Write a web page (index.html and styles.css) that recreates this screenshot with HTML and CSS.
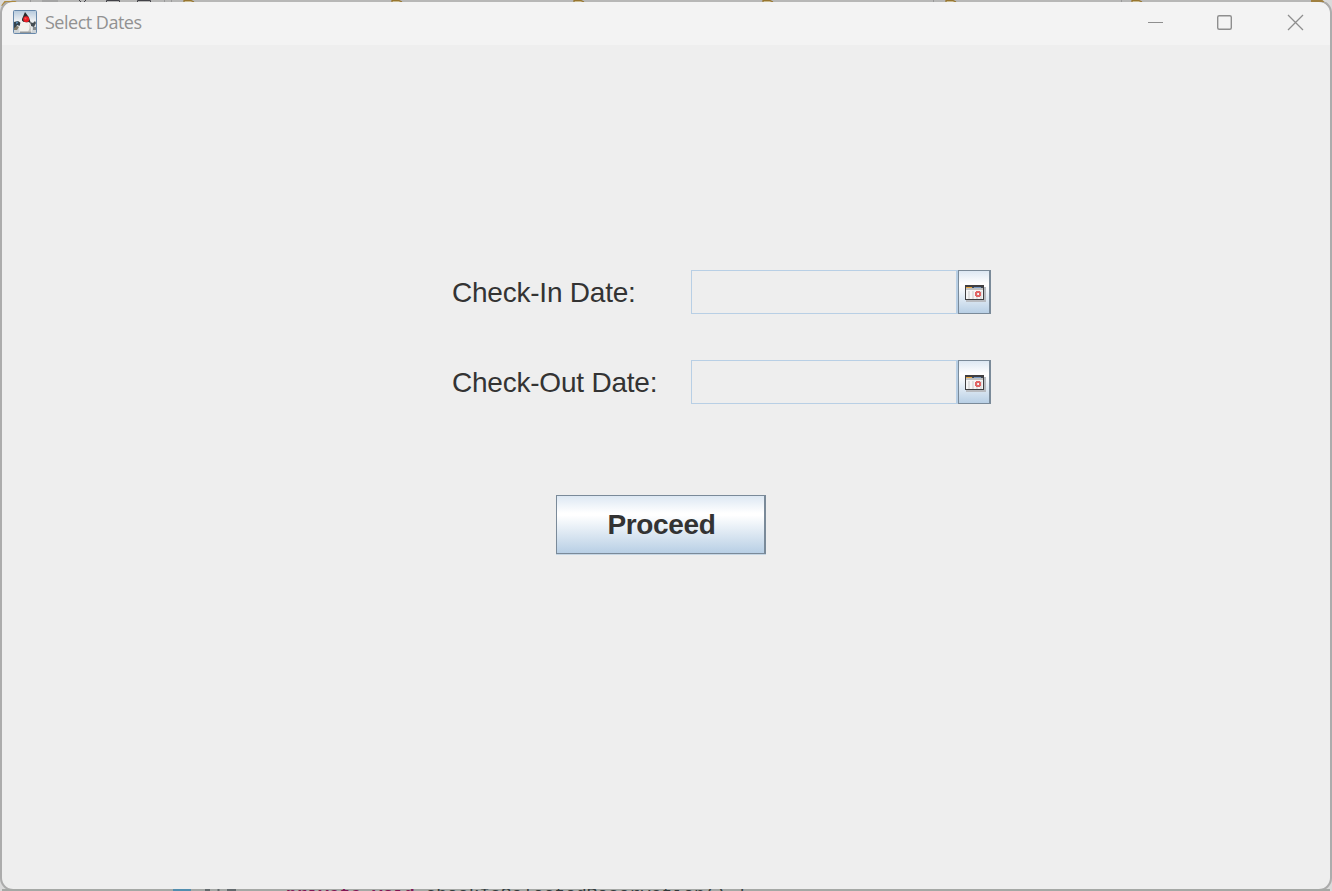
FILE: index.html
```html
<!DOCTYPE html>
<html lang="en">
<head>
<meta charset="utf-8">
<title>Select Dates</title>
<link rel="stylesheet" href="styles.css">
</head>
<body>
<svg class="backdrop" width="1332" height="891" viewBox="0 0 1332 891" aria-hidden="true">
  <defs><path id="tab" d="M0 2V.5H7L10 2" fill="#c8b98f" stroke="#98762f" stroke-width="1.200"/></defs>
  <path d="M0 0H1332V891H0Z" fill="#b7b7b6"/>
  <path d="M0 0H12L0 12Z M0 876V891H14Z M1332 0H1318L1332 12Z M1332 876V891H1318Z" fill="#dadada"/>
  <path d="M2 6L5 2H15L18 4" fill="none" stroke="#ae8a3d" stroke-width="2"/>
  <path d="M30.500 0V2M164.500 0V2M171.500 0V2M933.500 0V2M1121.500 0V2" stroke="#999"/>
  <path d="M42 1H58" stroke="#a4a4a4" stroke-width="2"/>
  <path d="M79 0L81 2M86 0L84 2M106.500 2V.5H119.500V2M137.500 2V.5H150.500V2" stroke="#424248" fill="none"/>
  <use href="#tab" x="184"/><use href="#tab" x="392"/><use href="#tab" x="574"/><use href="#tab" x="763"/><use href="#tab" x="946"/><use href="#tab" x="1132"/>
  <path d="M1312 3V1H1322L1328 6" fill="none" stroke="#a08040" stroke-width="2"/>
  <path d="M2 889H1330V891H2Z" fill="#a5a8a5"/>
  <path d="M173 890H191" stroke="#528eaf" stroke-width="2"/>
  <path d="M205 890H210M218.500 889V891M227 890H236" stroke="#62696c" stroke-width="2"/>
</svg>
<div class="code"><span class="keyword">private void</span> checkIsSelectedReservation() {</div>
<main class="window">
  <header class="titlebar">
    <svg class="duke" width="24" height="24" viewBox="0 0 24 24">
      <defs><linearGradient id="sky" x2="0" y2="1"><stop stop-color="#b5c9dc"/><stop offset=".45" stop-color="#eef1f3"/><stop offset="1" stop-color="#c7cdd1"/></linearGradient></defs>
      <rect x=".5" y=".5" width="23" height="23" rx="1" fill="url(#sky)" stroke="#6788aa"/>
      <path d="M1 12L5 11L8 13L7 16L4 15L3 18H1Z" fill="#35434d"/>
      <path d="M3 12L5 11.500V13L3 14Z" fill="#5887ac"/>
      <path d="M1 18L4 16L6 17L4 20H1Z" fill="#827a66"/>
      <path d="M17 12L20 13L22 11L23 13L21 17L18 16Z" fill="#454d52"/>
      <path d="M20 17H23V20H20Z" fill="#858b8e"/>
      <path d="M12 2Q16 6 17.500 12L15 14L9 13L9 9Z" fill="#292b2d"/>
      <path d="M8.500 10Q10 13 16 12Q20 18 18.500 22H6.500Q5.500 17 8.500 10Z" fill="#f3f2ee"/>
      <path d="M16 13Q19 19 17.500 21.500H15Q17.500 18 16 13Z" fill="#c5c5c1"/>
      <path d="M7 21.500H18V23H7Z" fill="#93979a"/>
      <circle cx="13.200" cy="9.300" r="3" fill="#e91e25"/>
      <circle cx="12.500" cy="8.500" r="1" fill="#ff5452"/>
    </svg>
    <span class="title">Select Dates</span>
    <svg class="controls" width="158" height="18" viewBox="0 0 158 18" fill="none" stroke="#8e8e8e">
      <path d="M0 8.500H15"/>
      <rect x="69.700" y="1.700" width="13.600" height="13.600" rx="1.500" stroke-width="1.400"/>
      <path d="M140 1L155 16M155 1L140 16" stroke-width="1.300"/>
    </svg>
  </header>
  <section class="form">
    <div class="row"><label class="label">Check-In Date:</label><div class="field"></div>
      <button class="pick" aria-label="Choose check-in date">
        <svg class="calendar" width="21" height="17" viewBox="0 0 21 17" shape-rendering="crispEdges">
          <path d="M1 2H21V17H1Z" fill="#b8bbc0"/><path d="M0 0H19V15H0Z" fill="#403f41"/>
          <path d="M1 2H18V5H1Z" fill="#bfc1c1"/><path d="M1 3H7V2H1Z" fill="#eda83f"/><path d="M7 2H9V3H7Z" fill="#405064"/><path d="M9 2H16V3H9Z" fill="#7698c2"/><path d="M16 2H18V3H16Z" fill="#424b58"/>
          <path d="M1 5H18V14H1Z" fill="#f5f5f5"/><path d="M4 6V14M8 6V14M12 6V14M16 6V14" stroke="#dfdfdf" stroke-width="2"/>
          <path d="M11 6H15V7H16V11H15V12H11V11H10V7H11ZM12 8V10H14V8Z" fill="#e16464" fill-rule="evenodd"/>
        </svg>
      </button>
    </div>
    <div class="row"><label class="label">Check-Out Date:</label><div class="field"></div>
      <button class="pick" aria-label="Choose check-out date">
        <svg class="calendar" width="21" height="17" viewBox="0 0 21 17" shape-rendering="crispEdges">
          <path d="M1 2H21V17H1Z" fill="#b8bbc0"/><path d="M0 0H19V15H0Z" fill="#403f41"/>
          <path d="M1 2H18V5H1Z" fill="#bfc1c1"/><path d="M1 3H7V2H1Z" fill="#eda83f"/><path d="M7 2H9V3H7Z" fill="#405064"/><path d="M9 2H16V3H9Z" fill="#7698c2"/><path d="M16 2H18V3H16Z" fill="#424b58"/>
          <path d="M1 5H18V14H1Z" fill="#f5f5f5"/><path d="M4 6V14M8 6V14M12 6V14M16 6V14" stroke="#dfdfdf" stroke-width="2"/>
          <path d="M11 6H15V7H16V11H15V12H11V11H10V7H11ZM12 8V10H14V8Z" fill="#e16464" fill-rule="evenodd"/>
        </svg>
      </button>
    </div>
    <button class="proceed">Proceed</button>
  </section>
</main>
</body>
</html>
```
FILE: styles.css
```css
* { box-sizing: border-box; }
body { margin: 0; width: 1332px; height: 891px; padding: 2px; overflow: hidden; background: #b7b7b6; font-family: "Liberation Sans", Arial, sans-serif; }
.backdrop { position: absolute; top: 0; left: 0; }
.code { position: absolute; left: 286px; top: 885px; height: 6px; overflow: hidden; white-space: pre; font: 17.900px/20px "Liberation Mono", monospace; color: #333a3b; }
.keyword { color: #7f1754; font-weight: bold; }
.window { position: relative; width: 1328px; height: 887px; border-radius: 11px; background: #eee; overflow: hidden; outline: 2px solid #acacac; clip-path: inset(0 -2px 0 -2px); }
.titlebar { height: 43px; background: #f3f3f3; display: flex; align-items: flex-start; padding: 8px 24px 0 11px; }
.duke { flex: none; }
.title { margin-left: 8px; font: 18px/25px "Open Sans", sans-serif; letter-spacing: -.5px; color: #919191; white-space: nowrap; }
.controls { margin-left: auto; margin-top: 4px; }
.form { display: flex; flex-direction: column; width: 540px; margin: 225px 0 0 450px; }
.row { display: flex; height: 45px; margin-bottom: 45px; }
.label { width: 239px; line-height: 46px; font-size: 28px; letter-spacing: -.22px; color: #333; }
.field { width: 267px; height: 44px; border: 1px solid #b8cfe5; border-right-width: 2px; }
.pick { display: flex; align-items: flex-start; width: 33px; height: 44px; padding: 14px 0 0 6px; border: 1px solid #7a8a99; border-right-width: 2px; background: linear-gradient(#dde8f3, #fff 30%, #fff 35%, #b8cfe5); }
.calendar { display: block; flex: none; }
.proceed { display: block; width: 210px; height: 59px; margin: 45px 0 0 104px; padding: 0 0 0 2px; border: 1px solid #7a8a99; border-right-width: 2px; background: linear-gradient(#dde8f3, #fff 30%, #fff 34%, #b8cfe5); box-shadow: 0 1px #c6d6e4; color: #333; font: bold 28px/57px "Liberation Sans", Arial, sans-serif; letter-spacing: -.35px; }
```
